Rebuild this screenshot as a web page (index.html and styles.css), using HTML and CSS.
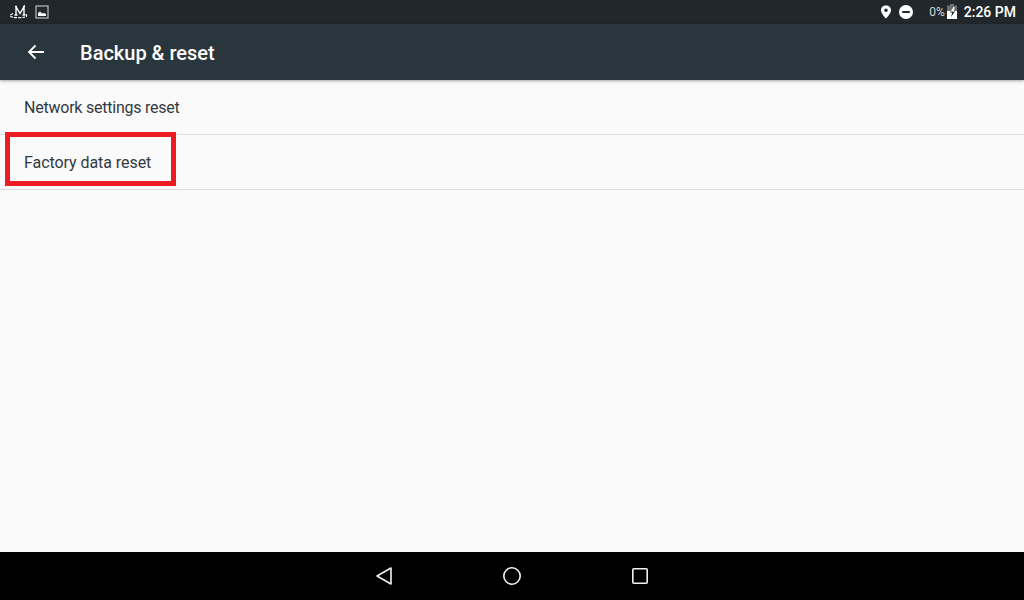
FILE: index.html
```html
<!DOCTYPE html>
<html lang="en">
<head>
    <meta charset="UTF-8">
    <meta name="viewport" content="width=device-width, initial-scale=1.0">
    <title>Backup &amp; reset</title>
    <link rel="stylesheet" href="styles.css">
</head>
<body>

    <div class="status-bar">
        <div class="status-left">
            <svg class="icon-m" width="24" height="16" viewBox="0 0 24 16">
                <path d="M10 2.5V11M10 2.8L14 9.5L18 2.8V11M9 2.5H11M17 2.5H19M8.5 11H11.5M16.5 11H19.5" fill="none" stroke="#fff" stroke-width="1.4"/>
                <path d="M7 9.5C5 10.3 4.3 11 4.3 11.8C4.3 13 8 13.7 12.5 13.7C17 13.7 20.7 13 20.7 11.8C20.7 11 20 10.3 19.5 10" fill="none" stroke="#fff" stroke-width="1.1" stroke-dasharray="3 1"/>
            </svg>
            <svg width="14" height="14" viewBox="0 0 14 14">
                <rect x="1" y="1" width="12" height="12" fill="#21272b" stroke="#bdbfc0" stroke-width="1.2"/>
                <path d="M3 11V8L5 6.5L7 8.5L9 8L11 9V11Z" fill="#fff"/>
            </svg>
        </div>
        <div class="status-right">
            <svg class="icon-pin" width="12" height="14" viewBox="0 0 12 14">
                <path fill-rule="evenodd" d="M6 0.5C3 0.5 1 2.6 1 5.2C1 8.5 6 13.5 6 13.5C6 13.5 11 8.5 11 5.2C11 2.6 9 0.5 6 0.5ZM6 3.4A1.8 1.8 0 1 1 6 7A1.8 1.8 0 1 1 6 3.4Z" fill="#fff"/>
            </svg>
            <svg class="icon-dnd" width="14" height="14" viewBox="0 0 14 14">
                <path fill-rule="evenodd" d="M7 0A7 7 0 1 1 7 14A7 7 0 1 1 7 0ZM3.2 5.9V8.1H10.8V5.9Z" fill="#fff"/>
            </svg>
            <span class="battery-text">0%</span>
            <svg class="icon-battery" width="10" height="16" viewBox="0 0 10 16">
                <path d="M3 0H7V1.5H10V7H0V1.5H3Z" fill="#6d7072"/>
                <path d="M0 7H10V15H0Z" fill="#fff"/>
                <path d="M6.5 3L3 8.5H5.2L4 13L8 7.5H5.8Z" fill="#21272b"/>
                <path d="M6.5 3L3.6 7.5H6.8L7.6 3Z" fill="#fff"/>
            </svg>
            <span class="clock">2:26 PM</span>
        </div>
    </div>

    <div class="toolbar">
        <svg class="back-arrow" width="18" height="16" viewBox="0 0 18 16">
            <path d="M17 8H2M8.5 1.5L2 8L8.5 14.5" fill="none" stroke="#fff" stroke-width="1.8"/>
        </svg>
        <h1 class="toolbar-title">Backup &amp; reset</h1>
    </div>

    <div class="content">
        <div class="list-item network-item">Network settings reset</div>
        <div class="list-item factory-item">Factory data reset</div>
        <div class="highlight-box"></div>
    </div>

    <div class="nav-bar">
        <svg width="16" height="18" viewBox="0 0 16 18">
            <path d="M15 1V17L1 9Z" fill="none" stroke="#f2f2f2" stroke-width="1.6" stroke-linejoin="round"/>
        </svg>
        <svg width="20" height="20" viewBox="0 0 20 20">
            <circle cx="10" cy="10" r="8.2" fill="none" stroke="#f2f2f2" stroke-width="1.6"/>
        </svg>
        <svg width="16" height="16" viewBox="0 0 16 16">
            <rect x="0.8" y="0.8" width="14.4" height="14.4" rx="1" fill="none" stroke="#f2f2f2" stroke-width="1.6"/>
        </svg>
    </div>

</body>
</html>
```

FILE: styles.css
```css
html, body {
    height: 100%;
}

body {
    font-family: Roboto, "Liberation Sans", sans-serif;
    display: flex;
    flex-direction: column;
    margin: 0;
    background-color: #fafafa;
    overflow: hidden;
}

.status-bar {
    height: 24px;
    flex-shrink: 0;
    display: flex;
    justify-content: space-between;
    align-items: center;
    padding: 0 8px 0 6px;
    background-color: #21272b;
    color: #fff;
}

.status-left,
.status-right {
    display: flex;
    align-items: center;
}

.status-left svg + svg {
    margin-left: 5px;
}

.icon-dnd {
    margin-left: 7px;
}

.battery-text {
    margin-left: 16px;
    font-size: 12px;
    color: #d5d6d7;
}

.icon-battery {
    margin-left: 2px;
}

.clock {
    margin-left: 7px;
    font-size: 14px;
    font-weight: 500;
}

.toolbar {
    position: relative;
    height: 56px;
    flex-shrink: 0;
    display: flex;
    align-items: center;
    padding-left: 27px;
    background-color: #2a363d;
    box-shadow: 0 1px 3px rgba(0, 0, 0, 0.35);
}

.toolbar-title {
    margin: 2px 0 0 35px;
    font-size: 20px;
    font-weight: 500;
    color: #fff;
}

.content {
    position: relative;
    flex-grow: 1;
}

.list-item {
    height: 54px;
    display: flex;
    align-items: center;
    padding-left: 24px;
    font-size: 16px;
    color: #333a3e;
    border-bottom: 1px solid #dcdcdc;
}

.network-item {
    letter-spacing: -0.23px;
}

.factory-item {
    letter-spacing: -0.06px;
}

.highlight-box {
    position: absolute;
    left: 5px;
    top: 52px;
    width: 171px;
    height: 54px;
    box-sizing: border-box;
    border: 5px solid #ed1c24;
}

.nav-bar {
    height: 48px;
    flex-shrink: 0;
    display: flex;
    justify-content: center;
    align-items: center;
    gap: 110px;
    background-color: #000;
}
```
